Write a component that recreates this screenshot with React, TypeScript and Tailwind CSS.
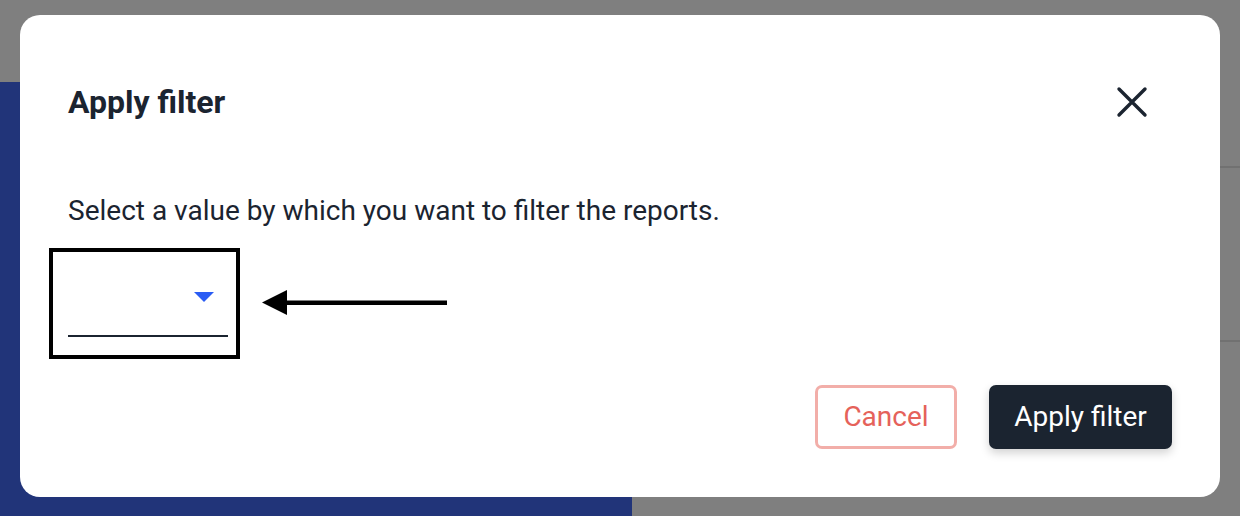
export default function App() {
  return (
    <div className="relative w-[1240px] h-[516px] overflow-hidden bg-[#7f7f7f] font-['Roboto',sans-serif]">
      {/* Page behind the backdrop */}
      <div className="h-[82px]" />
      <div className="flex h-[434px]">
        <div className="w-[632px] bg-[#213479]" />
        <div className="flex-1 flex flex-col">
          <div className="h-[86px] border-b-2 border-[#717171]" />
          <div className="h-[174px] border-b-2 border-[#717171]" />
        </div>
      </div>

      {/* Dialog */}
      <div className="absolute left-[20px] top-[15px] w-[1200px] h-[482px] rounded-[20px] bg-white flex flex-col pt-[67px] px-12 text-[#1b2430]">
        <div className="flex items-center justify-between h-[40px]">
          <h2 className="text-[32px] leading-[40px] font-bold">Apply filter</h2>
          <button className="mr-[24px]">
            <svg width="32" height="32" viewBox="0 0 32 32">
              <path d="M3 3 L29 29 M29 3 L3 29" stroke="#1b2430" strokeWidth="3.4" strokeLinecap="round" />
            </svg>
          </button>
        </div>

        <p className="mt-[73px] text-[28px] leading-[32px]">
          Select a value by which you want to filter the reports.
        </p>

        <div className="mt-[21px] -ml-[19px] flex items-start">
          <div className="w-[191px] h-[111px] border-4 border-black">
            <div className="ml-[15px] w-[160px] mt-[40px]">
              <div className="flex justify-end pr-[14px]">
                <svg width="20" height="10" viewBox="0 0 20 10">
                  <path d="M0 0 L20 0 L10 10 Z" fill="#2a5cf4" />
                </svg>
              </div>
              <div className="mt-[33px] h-[2px] bg-[#1b2430]" />
            </div>
          </div>
          <svg className="ml-[22px] mt-[42px]" width="185" height="25" viewBox="0 0 185 25">
            <path d="M0 12.5 L25 0 L25 25 Z" fill="#000" />
            <rect x="24" y="10.5" width="161" height="4.5" fill="#000" />
          </svg>
        </div>

        <div className="mt-[26px] flex justify-end gap-8">
          <button className="w-[142px] h-[64px] rounded-[7px] border-[3px] border-[#f2aea9] text-[#e5625a] text-[28px]">
            Cancel
          </button>
          <button className="w-[183px] h-[64px] rounded-[7px] bg-[#1b2430] text-white text-[28px] shadow-[0_4px_10px_rgba(0,0,0,0.18)]">
            Apply filter
          </button>
        </div>
      </div>
    </div>
  );
}
